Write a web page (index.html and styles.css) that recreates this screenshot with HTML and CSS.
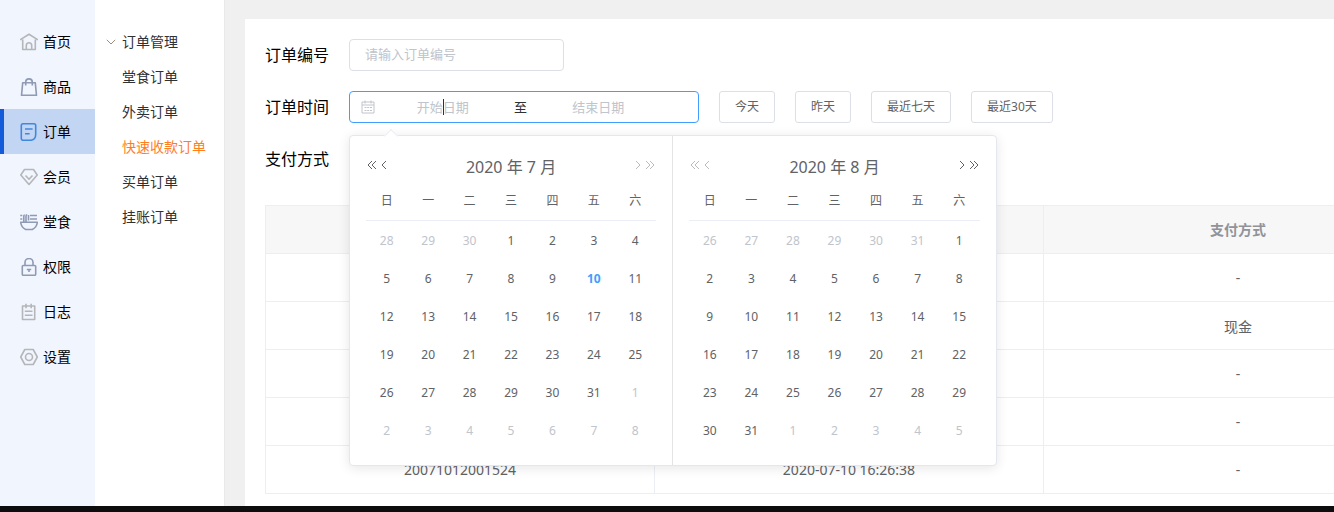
FILE: index.html
```html
<!DOCTYPE html>
<html lang="zh-CN">
<head>
  <meta charset="UTF-8" />
  <meta name="viewport" content="width=device-width, initial-scale=1.0"/>
  <title>快速收款订单</title>
  <link rel="stylesheet" href="styles.css">
</head>
<body>
  <div class="app">
    <nav class="sidebar">
      <a class="nav-item" href="#">
        <svg class="icon grey" viewBox="0 0 18 18"><path d="M.8 7.3V6.4L9 1.2l8.2 5.2v.9M2.7 6.5v10h12.6v-10M6.3 16.5v-4a2.7 2.7 0 0 1 5.4 0v4"/></svg>
        <span class="item-text">首页</span>
      </a>
      <a class="nav-item" href="#">
        <svg class="icon slate" viewBox="0 0 18 18"><path d="M2.7 4.8h12.6l1.2 12.5h-15zM5.7 7.5V4.2a3.3 3.3 0 0 1 6.6 0v3.3"/></svg>
        <span class="item-text">商品</span>
      </a>
      <a class="nav-item active" href="#">
        <svg class="icon blue" viewBox="0 0 18 18"><path d="M3 .8h11a1.7 1.7 0 0 1 1.7 1.7v9.3q-.2 5.4-5.6 5.5H3a1.7 1.7 0 0 1-1.7-1.7V2.5A1.7 1.7 0 0 1 3 .8zM5 6h7.6M5 10.8h4.6"/></svg>
        <span class="item-text">订单</span>
      </a>
      <a class="nav-item" href="#">
        <svg class="icon grey" viewBox="0 0 18 18"><path d="M4.5 1.5h9L17.2 7 9 16.5.8 7zM5.5 7.5 9 11.2l3.5-3.7"/></svg>
        <span class="item-text">会员</span>
      </a>
      <a class="nav-item" href="#">
        <svg class="icon slate" viewBox="0 0 18 18"><path d="M.7 9.2h16.6q-.4 5-5 7.3H5.7q-4.6-2.3-5-7.3zM.3 2.5h2M.3 6h2M3.8 9V3q0-1 1-1M6 9V3q0-1.2 1.2-1.2M8.5 7.5V2M10 2.5h7M10 6h7"/></svg>
        <span class="item-text">堂食</span>
      </a>
      <a class="nav-item" href="#">
        <svg class="icon slate" viewBox="0 0 18 18"><path d="M3.3 7.5h11.4q1 0 1 1v7.8q0 1-1 1H3.3q-1 0-1-1V8.500q0-1 1-1zM5 7.3V4.500a4 4 0 0 1 8 0v2.800M6.800 11.500h4.400M9 11.500v2.500"/></svg>
        <span class="item-text">权限</span>
      </a>
      <a class="nav-item" href="#">
        <svg class="icon grey" viewBox="0 0 18 18"><path d="M2.500 3h12.200v13.500H2.500zM6 .8v4.400M11.200.8v4.400M4.800 8.300h7.700M4.800 12.300h7.700"/></svg>
        <span class="item-text">日志</span>
      </a>
      <a class="nav-item" href="#">
        <svg class="icon grey" viewBox="0 0 18 18"><path d="M4.800 1.500h8.400L17.300 9l-4.100 7.500H4.800L.7 9z"/><circle cx="9" cy="9" r="3.500"/></svg>
        <span class="item-text">设置</span>
      </a>
    </nav>

    <nav class="submenu">
      <a class="sub-item parent" href="#">
        <svg class="chevron" viewBox="0 0 10 6"><path d="M.8.8 5 5 9.200.8"/></svg>
        <span class="item-text">订单管理</span>
      </a>
      <a class="sub-item" href="#"><span class="item-text">堂食订单</span></a>
      <a class="sub-item" href="#"><span class="item-text">外卖订单</span></a>
      <a class="sub-item current" href="#"><span class="item-text">快速收款订单</span></a>
      <a class="sub-item" href="#"><span class="item-text">买单订单</span></a>
      <a class="sub-item" href="#"><span class="item-text">挂账订单</span></a>
    </nav>

    <main class="main">
      <div class="panel">
        <form class="filters">
          <div class="form-row">
            <label class="form-label" for="orderNo">订单编号</label>
            <input class="text-input" id="orderNo" type="text" placeholder="请输入订单编号">
          </div>

          <div class="form-row">
            <label class="form-label" for="startDate">订单时间</label>
            <div class="date-range">
              <svg class="calendar-icon" viewBox="0 0 14 14"><path d="M1 2h12v11H1zM1 5h12M4 .5v3M10 .5v3M3.500 7.500h2M6.200 7.500h2M9 7.500h2M3.500 10.500h2M6.200 10.500h2M9 10.500h2"/></svg>
              <div class="range-field focused">
                <input class="range-input" id="startDate" type="text" placeholder="开始日期">
              </div>
              <span class="range-separator">至</span>
              <div class="range-field">
                <input class="range-input" id="endDate" type="text" placeholder="结束日期" aria-label="结束日期">
              </div>

              <div class="picker">
                <section class="month">
                  <header class="month-header">
                    <button class="arrow" type="button" aria-label="上一年"><svg viewBox="0 0 12 12"><path d="M6 2 2 6l4 4M10 2 6 6l4 4"/></svg></button>
                    <button class="arrow" type="button" aria-label="上个月"><svg viewBox="0 0 12 12"><path d="M8 2 4 6l4 4"/></svg></button>
                    <div class="month-title">2020 年 7 月</div>
                    <button class="arrow" type="button" aria-label="下个月" disabled><svg viewBox="0 0 12 12"><path d="m4 2 4 4-4 4"/></svg></button>
                    <button class="arrow" type="button" aria-label="下一年" disabled><svg viewBox="0 0 12 12"><path d="m2 2 4 4-4 4M6 2l4 4-4 4"/></svg></button>
                  </header>
                  <table class="days">
                    <thead>
                      <tr><th>日</th><th>一</th><th>二</th><th>三</th><th>四</th><th>五</th><th>六</th></tr>
                    </thead>
                    <tbody>
                      <tr><td class="other">28</td><td class="other">29</td><td class="other">30</td><td>1</td><td>2</td><td>3</td><td>4</td></tr>
                      <tr><td>5</td><td>6</td><td>7</td><td>8</td><td>9</td><td class="today">10</td><td>11</td></tr>
                      <tr><td>12</td><td>13</td><td>14</td><td>15</td><td>16</td><td>17</td><td>18</td></tr>
                      <tr><td>19</td><td>20</td><td>21</td><td>22</td><td>23</td><td>24</td><td>25</td></tr>
                      <tr><td>26</td><td>27</td><td>28</td><td>29</td><td>30</td><td>31</td><td class="other">1</td></tr>
                      <tr><td class="other">2</td><td class="other">3</td><td class="other">4</td><td class="other">5</td><td class="other">6</td><td class="other">7</td><td class="other">8</td></tr>
                    </tbody>
                  </table>
                </section>
                <section class="month">
                  <header class="month-header">
                    <button class="arrow" type="button" aria-label="上一年" disabled><svg viewBox="0 0 12 12"><path d="M6 2 2 6l4 4M10 2 6 6l4 4"/></svg></button>
                    <button class="arrow" type="button" aria-label="上个月" disabled><svg viewBox="0 0 12 12"><path d="M8 2 4 6l4 4"/></svg></button>
                    <div class="month-title">2020 年 8 月</div>
                    <button class="arrow" type="button" aria-label="下个月"><svg viewBox="0 0 12 12"><path d="m4 2 4 4-4 4"/></svg></button>
                    <button class="arrow" type="button" aria-label="下一年"><svg viewBox="0 0 12 12"><path d="m2 2 4 4-4 4M6 2l4 4-4 4"/></svg></button>
                  </header>
                  <table class="days">
                    <thead>
                      <tr><th>日</th><th>一</th><th>二</th><th>三</th><th>四</th><th>五</th><th>六</th></tr>
                    </thead>
                    <tbody>
                      <tr><td class="other">26</td><td class="other">27</td><td class="other">28</td><td class="other">29</td><td class="other">30</td><td class="other">31</td><td>1</td></tr>
                      <tr><td>2</td><td>3</td><td>4</td><td>5</td><td>6</td><td>7</td><td>8</td></tr>
                      <tr><td>9</td><td>10</td><td>11</td><td>12</td><td>13</td><td>14</td><td>15</td></tr>
                      <tr><td>16</td><td>17</td><td>18</td><td>19</td><td>20</td><td>21</td><td>22</td></tr>
                      <tr><td>23</td><td>24</td><td>25</td><td>26</td><td>27</td><td>28</td><td>29</td></tr>
                      <tr><td>30</td><td>31</td><td class="other">1</td><td class="other">2</td><td class="other">3</td><td class="other">4</td><td class="other">5</td></tr>
                    </tbody>
                  </table>
                </section>
              </div>
            </div>
            <button class="quick" type="button">今天</button>
            <button class="quick" type="button">昨天</button>
            <button class="quick" type="button">最近七天</button>
            <button class="quick" type="button">最近30天</button>
          </div>

          <div class="form-row">
            <span class="form-label">支付方式</span>
          </div>
        </form>

        <div class="table-wrap">
          <table class="orders">
            <thead>
              <tr><th></th><th></th><th>支付方式</th></tr>
            </thead>
            <tbody>
              <tr><td></td><td></td><td>-</td></tr>
              <tr><td></td><td></td><td>现金</td></tr>
              <tr><td></td><td></td><td>-</td></tr>
              <tr><td></td><td></td><td>-</td></tr>
              <tr><td>20071012001524</td><td>2020-07-10 16:26:38</td><td>-</td></tr>
            </tbody>
          </table>
        </div>
      </div>
    </main>
  </div>
  <footer class="bottom-bar"></footer>
</body>
</html>
```
FILE: styles.css
```css
* {
  box-sizing: border-box;
}

body {
  margin: 0;
  min-height: 100vh;
  display: flex;
  flex-direction: column;
  font-family: "Noto Sans", "Noto Sans CJK SC", sans-serif;
  font-size: 14px;
  color: #000;
  background-color: #f0f0f0;
}

button,
input {
  font-family: inherit;
}

a {
  text-decoration: none;
}

svg {
  fill: none;
  stroke: currentColor;
}

.app {
  flex: 1;
  display: flex;
}

.bottom-bar {
  height: 6px;
  background-color: #0d0d0d;
}

/* sidebar */
.sidebar {
  flex: none;
  width: 95px;
  padding-top: 19px;
  background-color: #f1f5fe;
}

.nav-item {
  display: flex;
  align-items: center;
  gap: 5px;
  height: 45px;
  padding-left: 16px;
  border-left: 4px solid transparent;
  color: #000;
}

.nav-item.active {
  border-left-color: #145bd9;
  background-color: #c2d5f2;
}

.item-text {
  padding-bottom: 2px;
}

.icon {
  width: 18px;
  height: 18px;
  stroke-width: 1.6;
  stroke-linejoin: round;
}

.grey {
  color: #b5b6b9;
}

.slate {
  color: #8f9ab3;
}

.blue {
  color: #4088de;
}

/* submenu */
.submenu {
  flex: none;
  width: 130px;
  padding-top: 24px;
  border-right: 1px solid #e9e9e9;
  background-color: #fff;
}

.sub-item {
  display: flex;
  align-items: center;
  height: 35px;
  padding-left: 27px;
  color: #303133;
}

.sub-item.parent {
  gap: 6px;
  padding-left: 11px;
}

.sub-item.current {
  color: #ff7f1f;
}

.chevron {
  width: 10px;
  height: 6px;
  color: #a08c7c;
}

/* main */
.main {
  flex: 1;
  min-width: 0;
  display: flex;
  padding: 19px 0 0 20px;
}

.panel {
  flex: 1;
  min-width: 0;
  padding: 20px 0 12px 20px;
  background-color: #fff;
}

.form-row {
  display: flex;
  align-items: center;
  gap: 20px;
  height: 32px;
  margin-bottom: 20px;
}

.form-label {
  padding-bottom: 2px;
  font-size: 16px;
}

.text-input {
  width: 215px;
  height: 32px;
  padding: 0 15px 2px;
  border: 1px solid #dcdfe6;
  border-radius: 4px;
  font-size: 13px;
}

::placeholder {
  color: #c0c4cc;
}

.date-range {
  position: relative;
  display: flex;
  align-items: center;
  width: 350px;
  height: 32px;
  padding: 0 32px 0 11px;
  border: 1px solid #409eff;
  border-radius: 4px;
}

.calendar-icon {
  width: 14px;
  height: 14px;
  color: #c0c4cc;
}

.range-field {
  position: relative;
  flex: 1;
  min-width: 0;
}

/* text cursor */
.range-field.focused::after {
  content: "";
  position: absolute;
  top: 2px;
  left: 50%;
  width: 1px;
  height: 16px;
  background-color: #303133;
}

.range-input {
  display: block;
  width: 100%;
  height: 20px;
  padding: 0;
  border: none;
  outline: none;
  text-align: center;
  font-size: 13px;
}

.range-separator {
  width: 20px;
  padding-bottom: 2px;
  text-align: center;
  font-size: 13px;
  color: #303133;
}

.quick {
  height: 32px;
  padding: 0 15px 2px;
  border: 1px solid #dcdfe6;
  border-radius: 3px;
  background-color: #fff;
  color: #606266;
  font-size: 12px;
}

/* date picker */
.picker {
  position: absolute;
  top: 43px;
  left: -1px;
  z-index: 10;
  display: flex;
  width: 648px;
  border: 1px solid #e4e7ed;
  border-radius: 4px;
  background-color: #fff;
  color: #606266;
  box-shadow: 0 2px 12px rgba(0, 0, 0, 0.1);
}

.picker::before {
  content: "";
  position: absolute;
  top: -5px;
  left: 36px;
  width: 9px;
  height: 9px;
  border: 1px solid #ebeef5;
  border-right: none;
  border-bottom: none;
  background-color: #fff;
  transform: rotate(45deg);
}

.month {
  width: 50%;
  padding: 16px;
}

.month:first-child {
  border-right: 1px solid #e4e4e4;
}

.month-header {
  display: flex;
  align-items: center;
  height: 28px;
}

.month-title {
  flex: 1;
  text-align: center;
  font-size: 16px;
}

.arrow {
  display: flex;
  padding: 0 0 2px;
  border: none;
  background: none;
  color: #606266;
}

.arrow svg {
  width: 12px;
  height: 12px;
}

.arrow:disabled {
  color: #bbb;
}

.days {
  width: 100%;
  table-layout: fixed;
  border-collapse: separate;
  border-spacing: 0;
  font-size: 12px;
  line-height: 18px;
  text-align: center;
}

.days th {
  height: 41px;
  padding: 2px 0 0;
  border-bottom: 1px solid #ebeef5;
  font-weight: 400;
}

.days td {
  height: 38px;
  padding: 2px 0 0;
}

.days .other {
  color: #c0c4cc;
}

.days .today {
  color: #409eff;
  font-weight: 700;
}

/* orders table */
.table-wrap {
  margin-top: 30px;
  overflow: hidden;
}

.orders {
  width: 1168px;
  table-layout: fixed;
  border-collapse: separate;
  border-spacing: 0;
  border-top: 1px solid #ebeef5;
  border-left: 1px solid #ebeef5;
  color: #606266;
  text-align: center;
}

.orders th,
.orders td {
  height: 48px;
  padding: 0 0 2px;
  border-right: 1px solid #ebeef5;
  border-bottom: 1px solid #ebeef5;
}

.orders td {
  padding-bottom: 0;
}

.orders th {
  background-color: #f7f7f7;
  color: #909399;
}
```
